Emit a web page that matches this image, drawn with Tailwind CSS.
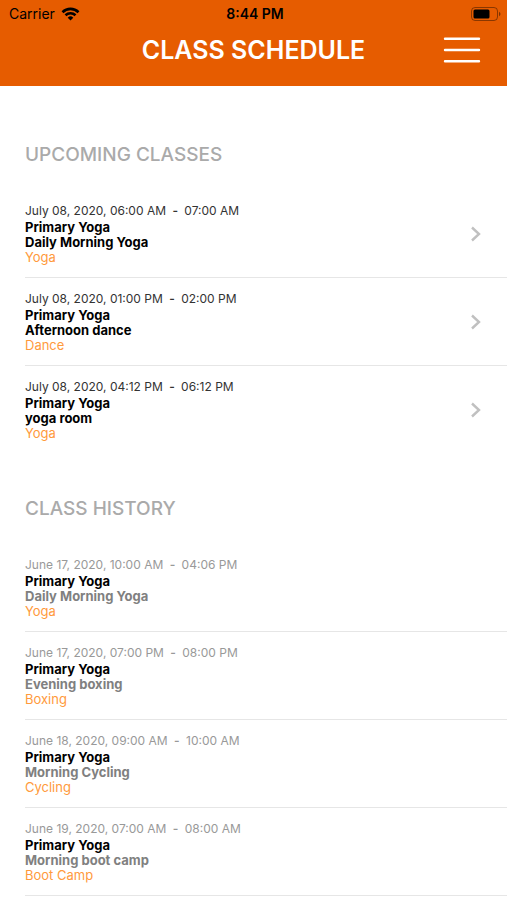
<!DOCTYPE html>
<html lang="en">

<head>
	<title>Class Schedule</title>
	<meta charset="UTF-8" />
	<meta name="viewport" content="width=device-width, initial-scale=1" />
	<script src="https://cdn.jsdelivr.net/npm/@tailwindcss/browser@4"></script>
</head>

<body class="bg-white font-['Inter',sans-serif] text-[13px] leading-[15px] text-black overflow-x-hidden">

	<header class="bg-[#e65c00] pb-[14px]">
		<!-- Status bar -->
		<div class="grid grid-cols-3 items-center h-7 pl-[9px] pr-[6px] text-[14px] leading-5">
			<div class="flex items-center gap-[6px]">
				<span>Carrier</span>
				<svg class="w-[19px] h-[14px]" viewBox="0 0 18 14" fill="none" stroke="currentColor" stroke-width="2.6" aria-hidden="true">
					<path d="M1 5.2a11.4 11.4 0 0 1 16 0" />
					<path d="M4 8.3a7.2 7.2 0 0 1 10 0" />
					<path d="M9 13.6 6.2 10.7a4 4 0 0 1 5.6 0z" fill="currentColor" stroke="none" />
				</svg>
			</div>
			<span class="text-center font-semibold">8:44 PM</span>
			<svg class="justify-self-end w-[30px] h-[14px]" viewBox="0 0 30 14" aria-hidden="true">
				<rect x="0.5" y="0.5" width="26" height="13" rx="3.5" fill="none" stroke="#000" stroke-opacity=".4" />
				<rect x="2.5" y="2.5" width="16" height="9" rx="1.5" />
				<path d="M28 4.8c2 .8 2 3.6 0 4.4z" fill-opacity=".45" />
			</svg>
		</div>

		<!-- Title bar -->
		<div class="grid grid-cols-[1fr_auto_1fr] items-center h-11 px-[26px]">
			<h1 class="col-start-2 text-white text-[25px] font-semibold">CLASS SCHEDULE</h1>
			<button type="button" aria-label="Menu" class="justify-self-end text-white">
				<svg class="w-[38px] h-[26px]" viewBox="0 0 38 26" stroke="currentColor" stroke-width="2.4" stroke-linecap="round" aria-hidden="true">
					<path d="M2 1.8h34M2 13h34M2 24.2h34" />
				</svg>
			</button>
		</div>
	</header>

	<main class="pl-[25px]">

		<!-- Upcoming -->
		<section class="pt-[55px]">
			<h2 class="text-[19px] leading-7 font-medium text-[#aaaaaa]">UPCOMING CLASSES</h2>
			<ul class="mt-[21px] divide-y divide-[#e6e6e6]">
				<li>
					<a href="#" class="flex items-center justify-between py-3 pr-[26px]">
						<div>
							<p class="text-xs leading-[18px] text-[#333333]">July 08, 2020, 06:00 AM <span class="mx-[3px] font-semibold">-</span> 07:00 AM</p>
							<p class="font-bold">Primary Yoga</p>
							<p class="font-bold">Daily Morning Yoga</p>
							<p class="text-[#ff9a3c]">Yoga</p>
						</div>
						<svg class="w-[10px] h-4 text-[#c0c0c0]" viewBox="0 0 10 16" fill="none" stroke="currentColor" stroke-width="2.4" aria-hidden="true"><path d="M1 1.500 8 8l-7 6.500" /></svg>
					</a>
				</li>
				<li>
					<a href="#" class="flex items-center justify-between py-3 pr-[26px]">
						<div>
							<p class="text-xs leading-[18px] text-[#333333]">July 08, 2020, 01:00 PM <span class="mx-[3px] font-semibold">-</span> 02:00 PM</p>
							<p class="font-bold">Primary Yoga</p>
							<p class="font-bold">Afternoon dance</p>
							<p class="text-[#ff9a3c]">Dance</p>
						</div>
						<svg class="w-[10px] h-4 text-[#c0c0c0]" viewBox="0 0 10 16" fill="none" stroke="currentColor" stroke-width="2.4" aria-hidden="true"><path d="M1 1.500 8 8l-7 6.500" /></svg>
					</a>
				</li>
				<li>
					<a href="#" class="flex items-center justify-between py-3 pr-[26px]">
						<div>
							<p class="text-xs leading-[18px] text-[#333333]">July 08, 2020, 04:12 PM <span class="mx-[3px] font-semibold">-</span> 06:12 PM</p>
							<p class="font-bold">Primary Yoga</p>
							<p class="font-bold">yoga room</p>
							<p class="text-[#ff9a3c]">Yoga</p>
						</div>
						<svg class="w-[10px] h-4 text-[#c0c0c0]" viewBox="0 0 10 16" fill="none" stroke="currentColor" stroke-width="2.4" aria-hidden="true"><path d="M1 1.500 8 8l-7 6.500" /></svg>
					</a>
				</li>
			</ul>
		</section>

		<!-- History -->
		<section class="pt-[42px]">
			<h2 class="text-[19px] leading-7 font-medium text-[#aaaaaa]">CLASS HISTORY</h2>
			<ul class="mt-[21px]">
				<li class="py-3 border-b border-[#e6e6e6]">
					<p class="text-xs leading-[18px] text-[#999999]">June 17, 2020, 10:00 AM <span class="mx-[3px] font-semibold">-</span> 04:06 PM</p>
					<p class="font-bold">Primary Yoga</p>
					<p class="font-bold text-[#808080]">Daily Morning Yoga</p>
					<p class="text-[#ff9a3c]">Yoga</p>
				</li>
				<li class="py-3 border-b border-[#e6e6e6]">
					<p class="text-xs leading-[18px] text-[#999999]">June 17, 2020, 07:00 PM <span class="mx-[3px] font-semibold">-</span> 08:00 PM</p>
					<p class="font-bold">Primary Yoga</p>
					<p class="font-bold text-[#808080]">Evening boxing</p>
					<p class="text-[#ff9a3c]">Boxing</p>
				</li>
				<li class="py-3 border-b border-[#e6e6e6]">
					<p class="text-xs leading-[18px] text-[#999999]">June 18, 2020, 09:00 AM <span class="mx-[3px] font-semibold">-</span> 10:00 AM</p>
					<p class="font-bold">Primary Yoga</p>
					<p class="font-bold text-[#808080]">Morning Cycling</p>
					<p class="text-[#ff9a3c]">Cycling</p>
				</li>
				<li class="py-3 border-b border-[#e6e6e6]">
					<p class="text-xs leading-[18px] text-[#999999]">June 19, 2020, 07:00 AM <span class="mx-[3px] font-semibold">-</span> 08:00 AM</p>
					<p class="font-bold">Primary Yoga</p>
					<p class="font-bold text-[#808080]">Morning boot camp</p>
					<p class="text-[#ff9a3c]">Boot Camp</p>
				</li>
			</ul>
		</section>

	</main>

</body>

</html>
